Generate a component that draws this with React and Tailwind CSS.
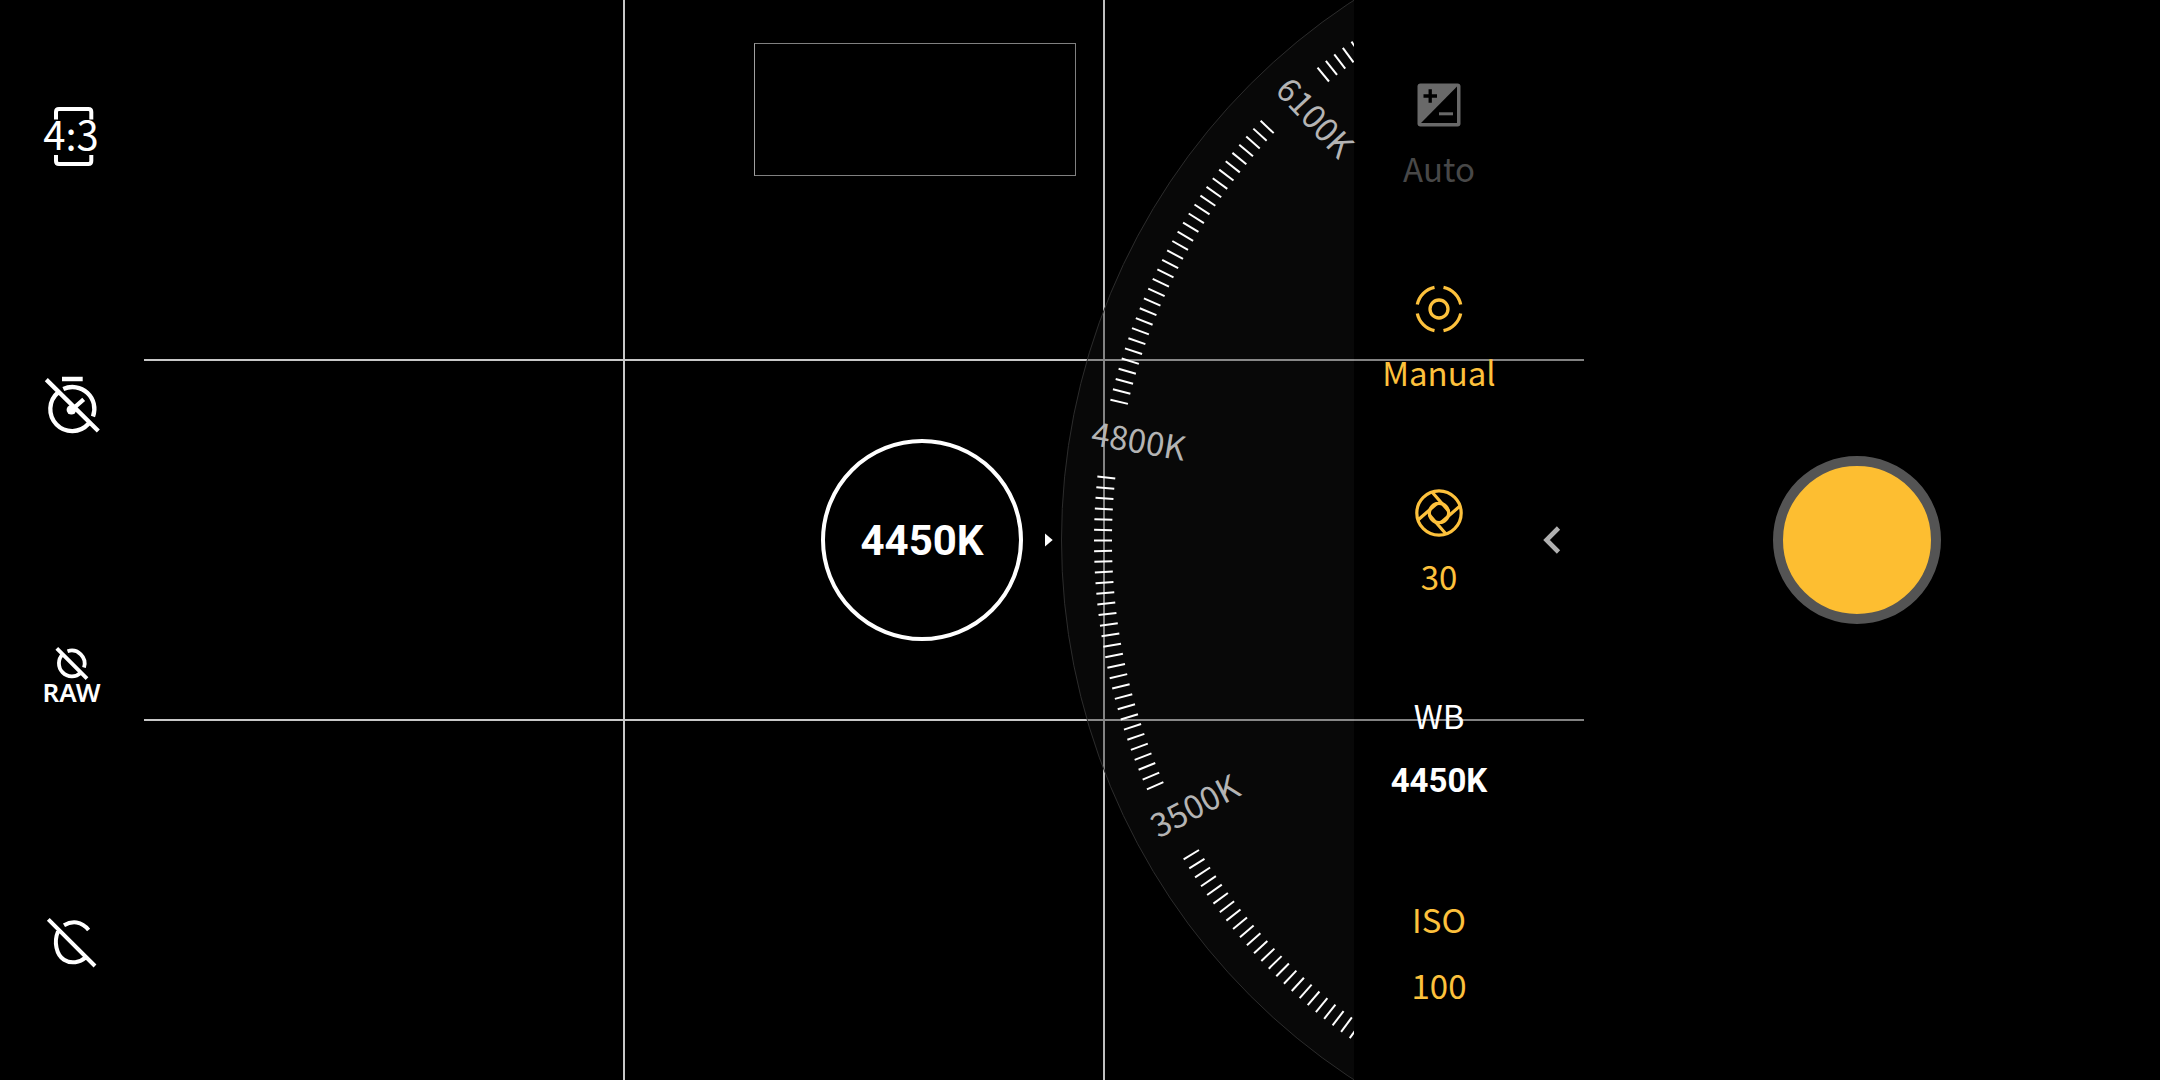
import React from "react";

const SANS = "font-['Noto_Sans_CJK_SC','Noto_Sans',sans-serif]";

function RatioIcon() {
  return (
    <svg viewBox="0 0 104 110" className="w-[104px] h-[110px]" fill="none" stroke="#fff" strokeWidth="4">
      <path d="M36 39.5V32q0-3 3-3h29.3q3 0 3 3v7.5M36 75v6q0 3 3 3h29.300q3 0 3-3v-6" />
      <text x="51" y="70" fill="#fff" stroke="none" fontSize="40" textAnchor="middle" className={SANS}>4:3</text>
    </svg>
  );
}

function TimerOffIcon() {
  return (
    <svg viewBox="0 0 104 110" className="w-[104px] h-[110px]" fill="none" stroke="#fff" strokeWidth="4.3">
      <path d="M42 29h20.7M26.3 29.6 78.3 81M38 42.5A21.9 21.9 0 1 0 68.5 73.800M43.300 39A21.900 21.900 0 0 1 73 66.500M51.500 60 63.700 49.300" />
      <circle cx="51.4" cy="59.8" r="4.8" fill="#fff" stroke="none" />
    </svg>
  );
}

function RawOffIcon() {
  return (
    <svg viewBox="0 0 104 110" className="w-[104px] h-[110px]" fill="none" stroke="#fff" strokeWidth="3.8">
      <path d="M36.8 28.300 67 58.700M42.900 34A13 13 0 1 0 61 52.700M47.500 31.200A13 13 0 0 1 64 47.500" />
      <text x="51.5" y="82" fill="#fff" stroke="none" fontSize="26" fontWeight="600" textAnchor="middle" className="font-['Noto_Sans',sans-serif]">RAW</text>
    </svg>
  );
}

function NightOffIcon() {
  return (
    <svg viewBox="0 0 104 110" className="w-[104px] h-[110px]" fill="none" stroke="#fff" strokeWidth="4">
      <path d="M28.300 29.300 75 76M44 35.300C52 30.500 61.500 31 68.600 40M38 41.500C33.500 52 36.500 65 44 69.800 51 74.200 60 72.500 65.500 67.500" />
    </svg>
  );
}

function ExposureIcon() {
  return (
    <svg viewBox="0 0 48 48" className="size-12">
      <rect x="2.5" y="2.5" width="43" height="43" rx="3" fill="#696969" />
      <path d="M42 5.500V42H6z" fill="#000" />
      <path d="M8.500 15H22M15.200 8.300v13.500" stroke="#000" strokeWidth="3.3" />
      <path d="M24 32.800h14" stroke="#696969" strokeWidth="3" />
    </svg>
  );
}

function FocusIcon() {
  return (
    <svg viewBox="-24 -24 48 48" className="size-12" fill="none" stroke="currentColor" strokeWidth="3.3">
      <circle r="9" />
      <path d="M4.500-21.700A22.200 22.200 0 0 1 21.700-4.500M21.700 4.500A22.200 22.200 0 0 1 4.500 21.700M-4.500 21.700A22.200 22.200 0 0 1-21.700 4.500M-21.700-4.500A22.200 22.200 0 0 1-4.500-21.700" />
    </svg>
  );
}

function ApertureIcon() {
  return (
    <svg viewBox="-24 -24 48 48" className="size-12" fill="none" stroke="currentColor" strokeWidth="3.2">
      <circle r="22.2" />
      <circle r="9.7" />
      <path d="M-7-21 10-1.500M21-7 1.500 10M7 21-10 1.500M-21 7-1.500-10" />
    </svg>
  );
}

const TOOLS = [
  { name: "Aspect ratio 4:3", Icon: RatioIcon },
  { name: "Timer off", Icon: TimerOffIcon },
  { name: "RAW off", Icon: RawOffIcon },
  { name: "Night mode off", Icon: NightOffIcon },
];

const SETTINGS = [
  { name: "Exposure", Icon: ExposureIcon, value: "Auto", tone: "text-[#484848]" },
  { name: "Focus", Icon: FocusIcon, value: "Manual", tone: "text-[#fdc13c]" },
  { name: "Shutter speed", Icon: ApertureIcon, value: "30", tone: "text-[#fdc13c]" },
  { name: "White balance", title: "WB", value: "4450K", tone: "text-white", active: true },
  { name: "ISO", title: "ISO", value: "100", tone: "text-[#fdc13c]" },
];

const DIAL_LABELS = [
  { text: "6100K", angle: 47 },
  { text: "4800K", angle: 9.7 },
  { text: "3500K", angle: -27.7 },
];
const TICK_STARTS = [50.6, 13.3, -24, -61.4];

function Dial() {
  return (
    <svg viewBox="0 0 293 1080" preserveAspectRatio="xMinYMid meet" className="h-full w-[293px] shrink-0 overflow-visible" role="img" aria-label="White balance dial">
      <clipPath id="dial-window">
        <rect width="293" height="1080" />
      </clipPath>
      <g clipPath="url(#dial-window)">
        <circle cx="645" cy="540" r="644.5" fill="#161616" fillOpacity="0.36" stroke="#2c2c2c" />
        {TICK_STARTS.map((start) =>
          Array.from({ length: 31 }, (_, i) => (
            <path
              key={start + "-" + i}
              d="M33 540.500H51"
              stroke="#fff"
              strokeWidth="2"
              transform={`rotate(${start + i} 645 540.5)`}
            />
          ))
        )}
      </g>
      {DIAL_LABELS.map((l) => (
        <text
          key={l.text}
          x="69"
          y="550"
          fontSize="33"
          fill="#b4b4b4"
          textAnchor="middle"
          className={SANS}
          transform={`rotate(${l.angle} 645 540.5)`}
        >
          {l.text}
        </text>
      ))}
    </svg>
  );
}

function GridLines() {
  return (
    <div className="absolute inset-0 pointer-events-none" aria-hidden="true">
      <div className="absolute inset-y-0 left-1/3 w-0.5 -translate-x-px bg-[#c8c8c8]" />
      <div className="absolute inset-y-0 left-2/3 w-0.5 -translate-x-px bg-[#c0c0c0]" />
      <div className="absolute inset-x-0 top-1/3 h-0.5 -translate-y-px bg-[#c8c8c8]" />
      <div className="absolute inset-x-0 top-2/3 h-0.5 -translate-y-px bg-[#c8c8c8]" />
    </div>
  );
}

export default function App() {
  return (
    <div className={`flex h-screen min-w-full bg-black text-white overflow-hidden ${SANS}`}>
      <nav className="flex w-36 shrink-0 flex-col" aria-label="Camera tools">
        {TOOLS.map(({ name, Icon }) => (
          <button key={name} aria-label={name} className="flex flex-1 items-center justify-center">
            <Icon />
          </button>
        ))}
      </nav>

      <main className="relative flex min-w-0 flex-1">
        <GridLines />
        <div className="absolute top-[43px] right-[508px] h-[133px] w-[322px] border border-[#808080] border-l-[#a0a0a0]" role="img" aria-label="Histogram" />

        <div className="relative flex flex-1 items-center justify-end">
          <button className="flex size-[202px] items-center justify-center rounded-full border-4 border-white font-['Roboto',sans-serif] text-[42px] font-bold">
            4450K
          </button>
          <svg viewBox="0 0 8 14" className="ml-[22px] mr-2 h-3.5 w-2" aria-hidden="true">
            <path d="M0 .500 7.700 7 0 13.500z" fill="#fff" />
          </svg>
          <Dial />
        </div>

        <div className="relative flex bg-black/35">
          <div className="flex w-[170px] flex-col pt-[34px] pb-[26px]">
            {SETTINGS.map(({ name, Icon, title, value, tone, active }) => (
              <button
                key={name}
                aria-label={`${name} ${value}`}
                className={`flex flex-1 flex-col items-center justify-center text-[33px] leading-[48px] ${title ? "gap-[18px]" : "gap-[15px]"} ${tone}`}
              >
                {Icon ? <Icon /> : <span>{title}</span>}
                <span className={active ? "font-['Roboto',sans-serif] font-bold" : ""}>{value}</span>
              </button>
            ))}
          </div>
          <button aria-label="Back" className="flex w-[60px] items-center justify-center pr-1">
            <svg viewBox="0 0 18 28" className="h-7 w-[18px]" fill="none" stroke="#b0b0b0" strokeWidth="4.6">
              <path d="M15.500 2 3.500 14l12 12" />
            </svg>
          </button>
        </div>
      </main>

      <aside className="flex w-[576px] shrink-0 items-center justify-center pr-[30px]">
        <button aria-label="Take photo" className="size-[168px] rounded-full border-10 border-[#545454] bg-[#fdbe31]" />
      </aside>
    </div>
  );
}
